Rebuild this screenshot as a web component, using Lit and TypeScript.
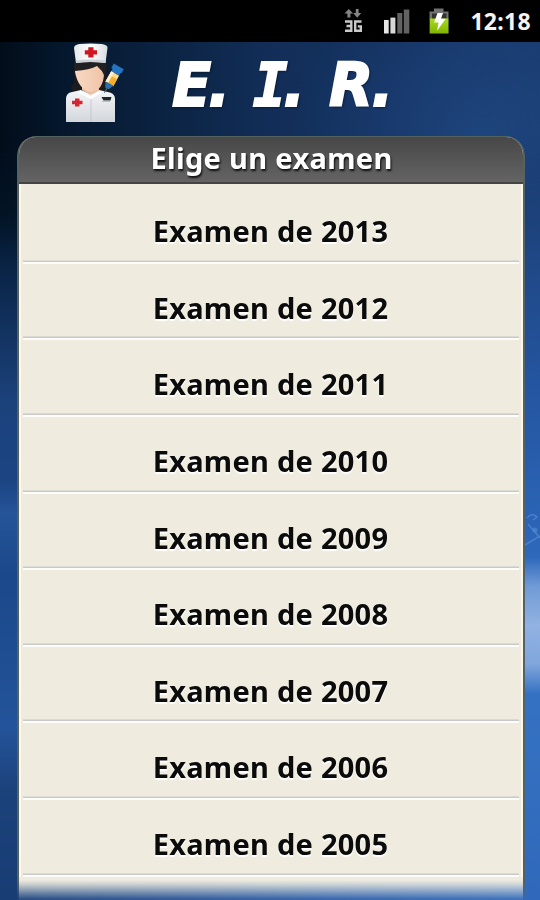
import { LitElement, html, css } from "lit";
import { customElement } from "lit/decorators.js";

@customElement("status-bar")
class StatusBar extends LitElement {
  static styles = css`
    :host { display: flex; height: 42px; background: #000; justify-content: flex-end; }
    svg { width: 130px; height: 42px; flex: none; }
    .clock { width: 80px; padding-right: 9px; box-sizing: border-box; text-align: right; color: #f4f4f4;
      font: bold 23px/43px "Noto Sans", sans-serif; letter-spacing: 0.3px; white-space: nowrap; }
  `;
  render() {
    return html`
      <svg viewBox="330 0 130 42">
        <defs>
          <linearGradient id="bat" x1="0" x2="0" y1="0" y2="1"><stop stop-color="#a6db22" /><stop offset="1" stop-color="#83b500" /></linearGradient>
        </defs>
        <path d="M344.500 13.500l4.300-4.500 4.300 4.500h-2.700v4h-3v-4zM353.200 13h2.600v-4h2.800v4h2.600l-4 4.700z" fill="#858585" />
        <path d="M345 21.500h6.300v9.200H345M346.500 26h5M361.500 21.500h-6.300v9.200h5.600v-4.300h-3" fill="none" stroke="#c9c9c9" stroke-width="2.4" />
        <path d="M384 20h4.700v13.500H384z" fill="#e6e6e6" /><path d="M390.400 17.600h5V33.500h-5z" fill="#d8d8d8" />
        <path d="M397.300 13h5v20.500h-5zM403.800 9.500h5.500v24h-5.500z" fill="#626262" />
        <path d="M429.500 11.500h4.500v-3h9.500v3h5V33.500h-19z" fill="#737373" />
        <path d="M432 13.500h14.500v7H432z" fill="#333" />
        <path d="M430 18.500h18.300v14.700H430z" fill="url(#bat)" />
        <path d="M437.500 13h5.500l-2 5.700h4.700l-8.600 12.100 1.400-8.400h-4.400z" fill="#fff" />
      </svg>
      <div class="clock">12:18</div>
    `;
  }
}

@customElement("nurse-icon")
class NurseIcon extends LitElement {
  static styles = css`
    :host, svg { display: block; width: 64px; height: 82px; }
  `;
  render() {
    return html`
      <svg viewBox="64 42 64 82">
        <defs>
          <linearGradient id="coat" x1="0" x2="0" y1="0" y2="1"><stop stop-color="#f4f5f7" /><stop offset="1" stop-color="#d3d7dc" /></linearGradient>
          <linearGradient id="cap" x1="0" x2="1"><stop stop-color="#e4e8eb" /><stop offset=".5" stop-color="#fff" /><stop offset="1" stop-color="#d7dce1" /></linearGradient>
          <linearGradient id="skin" x1="0" x2="1"><stop stop-color="#f8d9c3" /><stop offset="1" stop-color="#f0c3a7" /></linearGradient>
        </defs>
        <path d="M74.500 62Q73 67 74.500 77Q75 84 71 87Q70 91 76 94L107 93Q111 93 112 91Q107 86 106.500 77Q107 68 105 60z" fill="#1c1c1f" />
        <path d="M66 122V99Q66 94 70 92.500L81 90 90.500 94 99 90 110 92.500Q115 94 115 99V122z" fill="url(#coat)" />
        <path d="M82 86h17v5l-8.500 4L82 90z" fill="#ecc0a5" />
        <path d="M80.500 90.500l10 5.500 9-5.500 2 2.500-10.500 6-12.500-6z" fill="#fff" />
        <path d="M91 99V122" stroke="#bfc5cc" stroke-width=".8" />
        <path d="M75 72Q75 60 90.500 61Q104 62 104 74Q103 91 91 91.700Q78.500 90 75 72z" fill="url(#skin)" />
        <path d="M74 62L106 61Q108 72 104.500 76Q102 70 97 66Q90 70 75 71z" fill="#202023" />
        <path d="M74 48Q74 45 79 44Q90.500 43 102 44Q108 45 107.500 48L105.500 63Q90.500 61 76 63z" fill="url(#cap)" />
        <path d="M75.800 60.500Q90.500 58.500 105.800 60.500L105.500 63Q90.500 61 76 63z" fill="#cbd1d6" />
        <path d="M88.300 47.200h5.200v3h3.500v4.300h-3.500v3h-5.200v-3h-3.500v-4.300h3.500z" fill="#cf1722" />
        <path d="M75 98.500h4.500v2.300h3v3.500h-3v2.200H75v-2.200h-3v-3.500h3z" fill="#d32632" />
        <g transform="translate(119 66.500) rotate(29)">
          <path d="M-6 0h11.500v5h-11.500zM-4.500 3h9v5h-9z" fill="#2673c0" />
          <path d="M-4.500 8h9V20h-9z" fill="#ffdc90" /><path d="M-4.500 12h9v8h-9z" fill="#f7af2a" /><path d="M-4.500 8h3v12h-3z" fill="#fff1ce" />
          <path d="M-4.500 19.500h9l-2.500 5.500h-4z" fill="#2871ac" /><path d="M0 24v6" stroke="#3b6a91" />
        </g>
        <path d="M101.500 97h10l-1 3.500h-7z" fill="#20262b" /><path d="M102 101.300h8" stroke="#aeb7bd" />
      </svg>
    `;
  }
}

@customElement("exam-list")
class ExamList extends LitElement {
  static styles = css`
    :host { display: block; width: 508px; height: 764px; box-sizing: border-box; overflow: hidden;
      border: solid #56625f; border-width: 1.5px 2px 0; border-radius: 19px 19px 0 0; background: #efecdf;
      -webkit-mask: linear-gradient(#000 744px, rgba(0,0,0,.8) 749px, rgba(0,0,0,.08) 763px);
      mask: linear-gradient(#000 744px, rgba(0,0,0,.8) 749px, rgba(0,0,0,.08) 763px); }
    .title { height: 47px; box-sizing: border-box; border-bottom: 2px solid #454545; padding-left: 2px;
      background: linear-gradient(#474747, #646464); color: #fff; text-align: center;
      font: bold 29px/41px "Noto Sans", sans-serif; letter-spacing: .33px; text-shadow: 1px 2px 2px #111; }
    .rows { padding: 3px 4px 0 4px; box-shadow: inset 2px 0 #fff8e9, inset -2px 0 #faf8ee; }
    .row { height: 76.650px; box-sizing: border-box; border-bottom: 2px solid #fcfcfa;
      box-shadow: inset 0 -1.500px #c9c9c7; text-align: center; color: #0b0b0b;
      font: bold 29px/87px "Noto Sans", sans-serif; letter-spacing: .27px; text-shadow: 0 1.500px 1px #fff; white-space: nowrap; }
    .label { display: inline-block; }
  `;
  years = [2013, 2012, 2011, 2010, 2009, 2008, 2007, 2006, 2005];
  render() {
    return html`
      <div class="title"><span class="label">Elige un examen</span></div>
      <div class="rows">${this.years.map((y) => html`<div class="row"><span class="label">Examen de ${y}</span></div>`)}</div>
    `;
  }
}

@customElement("app-root")
class AppRoot extends LitElement {
  static styles = css`
    :host { display: block; width: 540px; height: 900px; overflow: hidden; background: #000; }
    .screen { height: 858px; box-sizing: border-box; position: relative; background: #1c4a8c; }
    .backdrop { position: absolute; inset: 0; width: 540px; height: 858px; }
    .header { position: relative; height: 94px; display: flex; box-sizing: border-box; padding-left: 64px; }
    .brand { margin-left: 44px; display: grid; grid-template-columns: 81px 76px 76px; color: #fff;
      font: italic bold 61px/85px "DejaVu Sans", sans-serif; white-space: nowrap;
      -webkit-text-stroke: 2px #fff; text-shadow: 1px 1px 3px #03081c; height: 85px; }
    .initial { display: block; height: 85px; transform: scaleX(.94); transform-origin: left; letter-spacing: -3px; }
    .slab { font-family: "DejaVu Sans Mono", monospace; letter-spacing: -4.500px; }
    exam-list { position: relative; margin-left: 16.500px; }
  `;
  render() {
    return html`
      <status-bar></status-bar>
      <div class="screen">
        <svg class="backdrop" viewBox="0 42 540 858">
          <defs>
            <linearGradient id="left" x1="0" x2="0" y1="0" y2="1">
              <stop stop-color="#020c18" /><stop offset=".2" stop-color="#04172a" /><stop offset=".28" stop-color="#0b274c" />
              <stop offset=".42" stop-color="#1c427c" /><stop offset=".51" stop-color="#1b4482" /><stop offset=".55" stop-color="#255499" />
              <stop offset=".62" stop-color="#1b488a" /><stop offset=".8" stop-color="#23539a" /><stop offset=".87" stop-color="#1c427b" /><stop offset="1" stop-color="#183d75" />
            </linearGradient>
            <linearGradient id="right" x1="0" x2="0" y1="0" y2="1">
              <stop stop-color="#15305d" /><stop offset=".15" stop-color="#1c3e73" /><stop offset=".4" stop-color="#2455a0" />
              <stop offset=".6" stop-color="#2d68bb" /><stop offset=".635" stop-color="#719bd6" /><stop offset=".68" stop-color="#91b2e2" />
              <stop offset=".725" stop-color="#80a6dc" /><stop offset=".76" stop-color="#3571c2" /><stop offset="1" stop-color="#3069bb" />
            </linearGradient>
            <linearGradient id="top" x1="0" x2="1">
              <stop stop-color="#020d1a" /><stop offset=".1" stop-color="#04162a" /><stop offset=".3" stop-color="#0b2342" /><stop offset=".5" stop-color="#122e58" /><stop offset=".75" stop-color="#143160" /><stop offset="1" stop-color="#17386b" />
            </linearGradient>
            <radialGradient id="glow" gradientUnits="userSpaceOnUse" cx="480" cy="140" r="190"><stop stop-color="#24518f" stop-opacity=".55" /><stop offset="1" stop-color="#24518f" stop-opacity="0" /></radialGradient>
            <linearGradient id="fade" x1="0" x2="0" y1="0" y2="1"><stop offset=".45" stop-color="#fff" /><stop offset="1" stop-color="#000" /></linearGradient>
            <mask id="soft"><path d="M0 42h540v208H0z" fill="url(#fade)" /></mask>
            <linearGradient id="foot"><stop stop-color="#1a427d" /><stop offset=".6" stop-color="#2a5da9" /><stop offset="1" stop-color="#3069bb" /></linearGradient>
          </defs>
          <path d="M0 42h270v858H0z" fill="url(#left)" />
          <path d="M270 42h270v858H270z" fill="url(#right)" />
          <g mask="url(#soft)">
            <path d="M0 42h540v208H0z" fill="url(#top)" />
            <path d="M0 42h540v208H0z" fill="url(#glow)" />
          </g>
          <path d="M18 870h506v30H18z" fill="url(#foot)" />
          <path d="M527 518q5-6 10-1l-4 3M525 545l15-9M528 524l12 14" fill="none" stroke="#5f91d5" stroke-width="1.500" opacity=".6" />
          <circle cx="535" cy="530" r="2.500" fill="#5f91d5" opacity=".5" />
        </svg>
        <div class="header">
          <nurse-icon></nurse-icon>
          <div class="brand"><span class="initial">E.</span><span class="initial"><span class="slab">I</span><span>.</span></span><span class="initial">R.</span></div>
        </div>
        <exam-list></exam-list>
      </div>
    `;
  }
}
